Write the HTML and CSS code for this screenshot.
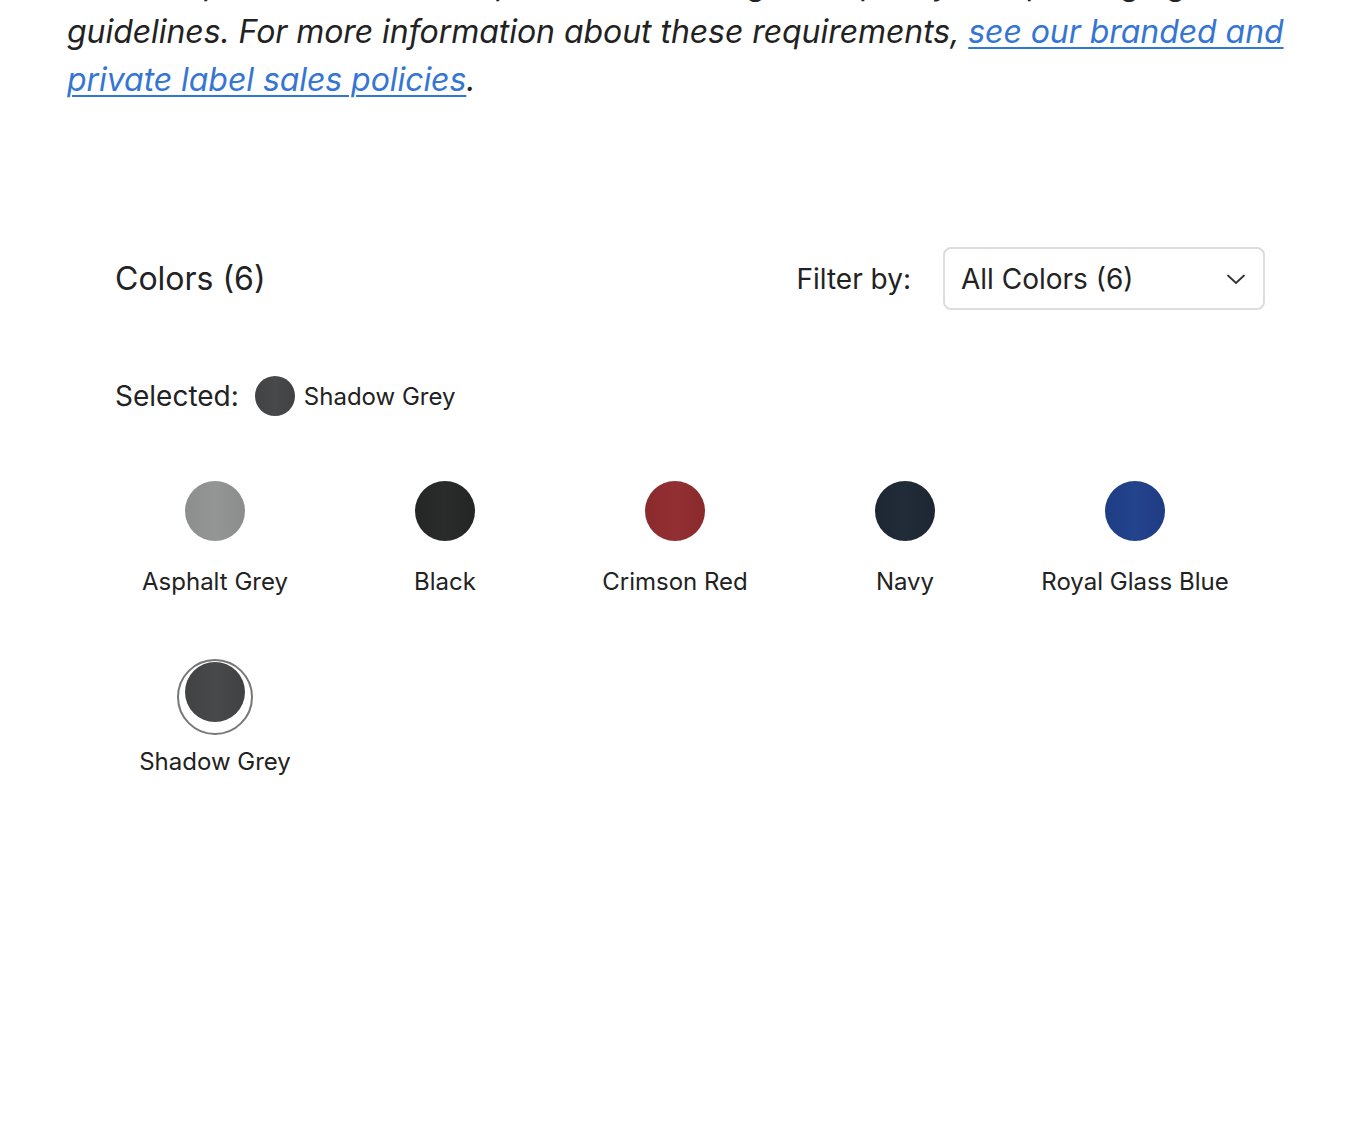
FILE: index.html
```html
<!doctype html>
<html lang="en">
<head>
    <meta charset="UTF-8">
    <title>Colors</title>
    <link rel="stylesheet" href="styles.css">
</head>
<body>

    <div class='intro'>
        <p class='note'>
            Branded products in our shop are reviewed against quality and packaging<br>
            guidelines. For more information about these requirements, <a href='#'>see our branded and
            private label sales policies</a>.
        </p>
    </div>

    <div class='colors'>

        <div class='colorsHeader'>
            <h2 class='colorsTitle'>Colors (6)</h2>
            <div class='filter'>
                <label class='filterLabel' for='colorFilter'>Filter by:</label>
                <div class='selectBox'>
                    <span id='colorFilter'>All Colors (6)</span>
                    <svg class='chevron' width='22' height='22' viewBox='0 0 22 22'>
                        <path d='M3 7.5 L11 15 L19 7.5' fill='none' stroke='#333' stroke-width='1.8' stroke-linecap='round' stroke-linejoin='round'/>
                    </svg>
                </div>
            </div>
        </div>

        <div class='selected'>
            <span class='selectedLabel'>Selected:</span>
            <span class='dot small shadowGrey'></span>
            <span class='selectedName'>Shadow Grey</span>
        </div>

        <div class='swatches'>
            <div class='swatch'>
                <div class='ring'><span class='dot asphaltGrey'></span></div>
                <div class='swatchName'>Asphalt Grey</div>
            </div>
            <div class='swatch'>
                <div class='ring'><span class='dot black'></span></div>
                <div class='swatchName'>Black</div>
            </div>
            <div class='swatch'>
                <div class='ring'><span class='dot crimsonRed'></span></div>
                <div class='swatchName'>Crimson Red</div>
            </div>
            <div class='swatch'>
                <div class='ring'><span class='dot navy'></span></div>
                <div class='swatchName'>Navy</div>
            </div>
            <div class='swatch'>
                <div class='ring'><span class='dot royalGlassBlue'></span></div>
                <div class='swatchName'>Royal Glass Blue</div>
            </div>
            <div class='swatch'>
                <div class='ring active'><span class='dot shadowGrey'></span></div>
                <div class='swatchName'>Shadow Grey</div>
            </div>
        </div>

    </div>

</body>
</html>
```

FILE: styles.css
```css
body
{
    margin:           0;
    font-family:      Inter, "Noto Sans", sans-serif;
    color:            #222;
    background-color: #fff;
}

.intro
{
    padding:          0 67px;
    margin-top:       -40px;
}

.note
{
    margin:           0;
    font-size:        32px;
    font-style:       italic;
    line-height:      48px;
    letter-spacing:   -0.06px;
    color:            #222;
}

.note a
{
    color:            #3575d3;
    text-decoration:  underline;
    text-decoration-thickness: 2px;
    text-underline-offset: 4px;
}

.colors
{
    padding:          143px 99px 0 115px;
}

.colorsHeader
{
    display:          flex;
    align-items:      center;
    justify-content:  space-between;
}

.colorsTitle
{
    margin:           0;
    font-size:        32px;
    font-weight:      400;
}

.filter
{
    display:          flex;
    align-items:      center;
    gap:              32px;
}

.filterLabel
{
    font-size:        28px;
}

.selectBox
{
    width:            322px;
    height:           63px;
    box-sizing:       border-box;
    padding:          0 16px 0 16px;
    display:          flex;
    align-items:      center;
    justify-content:  space-between;
    border:           2px solid #dcdcdc;
    border-radius:    8px;
    font-size:        28px;
}

.selected
{
    display:          flex;
    align-items:      center;
    margin-top:       66px;
}

.selectedLabel
{
    font-size:        28px;
    margin-right:     16px;
}

.selectedName
{
    font-size:        24px;
    margin-left:      9px;
}

.dot
{
    display:          block;
    width:            60px;
    height:           60px;
    border-radius:    50%;
}

.dot.small
{
    width:            40px;
    height:           40px;
}

.asphaltGrey    { background: linear-gradient(90deg, #8c8d8d, #949595 50%, #8b8c8c); }
.black          { background: linear-gradient(90deg, #242626, #2a2c2c 50%, #232525); }
.crimsonRed     { background: linear-gradient(90deg, #8b2a2d, #922f32 50%, #8a2a2d); }
.navy           { background: linear-gradient(90deg, #1d2733, #222c38 50%, #1d2733); }
.royalGlassBlue { background: linear-gradient(90deg, #1e3d85, #23438c 50%, #1e3c84); }
.shadowGrey     { background: linear-gradient(90deg, #414244, #48494b 50%, #404143); }

.swatches
{
    display:          grid;
    grid-template-columns: repeat(5, 200px);
    column-gap:       30px;
    row-gap:          63px;
    margin-top:       63px;
}

.swatch
{
    display:          flex;
    flex-direction:   column;
    align-items:      center;
}

.ring
{
    width:            76px;
    height:           76px;
    box-sizing:       border-box;
    display:          flex;
    justify-content:  center;
    align-items:      flex-start;
    border:           2px solid transparent;
    border-radius:    50%;
}

.ring.active
{
    border-color:     #777;
    padding-top:      1px;
}

.swatchName
{
    margin-top:       12px;
    font-size:        24px;
    line-height:      29px;
}
```
